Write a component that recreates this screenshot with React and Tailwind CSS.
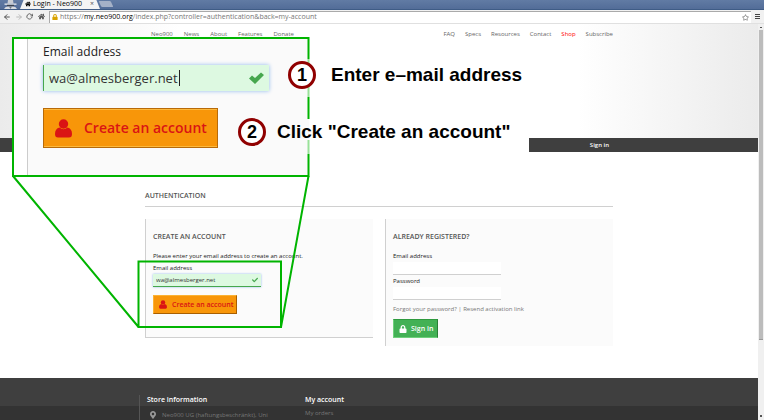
import React from "react";
import { FaCheck, FaLock, FaHome, FaMapMarkerAlt, FaRegStar } from "react-icons/fa";
import { FiRotateCw, FiArrowLeft, FiArrowRight } from "react-icons/fi";

const LEFT_LINKS = ["Neo900", "News", "About", "Features", "Donate"];
const RIGHT_LINKS = ["FAQ", "Specs", "Resources", "Contact", "Shop", "Subscribe"];

function IncognitoIcon() {
  return (
    <svg viewBox="0 0 13 9" className="h-[9px] w-[13px]">
      <path d="M3.500 3.500 4 0h5l.5 3.500Z" fill="#c9cdd3" />
      <path d="M.5 3.500h12v1.300H.5z" fill="#e8eaee" />
      <path d="M3 4.800h7v1.700H3z" fill="#3a424f" />
      <path d="M0 9q1-2.500 3.500-2.500h6Q12 6.500 13 9Z" fill="#d9dce1" />
      <path d="M5 6.500h3L6.500 9Z" fill="#6d7683" />
    </svg>
  );
}

function UserIcon({ className }) {
  return (
    <svg viewBox="0 0 17 19" className={className} fill="currentColor">
      <circle cx="8.500" cy="5" r="4.700" />
      <path d="M4.500 8.500Q8.500 12 12.500 8.500 17 9.500 17 15q0 3.500-3 3.500H3Q0 18.500 0 15 0 9.500 4.500 8.500Z" />
    </svg>
  );
}

function BrowserChrome() {
  return (
    <div className="text-[7px] leading-[8px]">
      <div className="flex h-[10px] items-end border-b border-[#3f5c86] bg-gradient-to-b from-[#617ba4] to-[#536d98]">
        <div className="flex h-[9px] w-[20px] justify-center overflow-hidden">
          <IncognitoIcon />
        </div>
        <div className="flex h-[10px] w-[80px] items-center gap-[2px] bg-[#f4f4f4] pl-[5px] text-black [clip-path:polygon(4px_0,76px_0,100%_100%,0_100%)]">
          <FaHome size={6} />
          <span className="whitespace-nowrap">Login - Neo900</span>
          <button aria-label="Close tab" className="ml-auto mr-[6px] text-[#555]">×</button>
        </div>
        <button aria-label="New tab" className="mb-[2px] h-[6px] w-[12px] -skew-x-[-25deg] rounded-[1px] bg-[#a5b1c7]" />
      </div>
      <div className="flex h-[14px] items-center border-b border-[#e0e0e0] bg-[#f1f1f1] pl-[3px] text-[#555]">
        <button aria-label="Back" className="w-[12px]"><FiArrowLeft size={8} strokeWidth={3} /></button>
        <button aria-label="Forward" className="w-[11px] text-[#bbb]"><FiArrowRight size={8} strokeWidth={3} /></button>
        <button aria-label="Reload" className="w-[12px]"><FiRotateCw size={7} strokeWidth={3} /></button>
        <button aria-label="Home" className="w-[11px]"><FaHome size={7} /></button>
        <div className="flex h-[12px] flex-1 items-center gap-[2px] border-l border-t border-[#aaa] bg-white pl-[2px] pr-[2px] text-[#777]">
          <FaLock size={6} className="text-[#d9a300]" />
          <div className="flex-1 whitespace-nowrap">
            https://<span className="text-black">my.neo900.org</span>/index.php?controller=authentication&amp;back=my-account
          </div>
          <button aria-label="Bookmark" className="text-[#777]"><FaRegStar size={7} /></button>
        </div>
        <button aria-label="Menu" className="mx-[4px] flex w-[5px] flex-col gap-px">
          <span className="h-px w-full bg-[#444]" />
          <span className="h-px w-full bg-[#444]" />
          <span className="h-px w-full bg-[#444]" />
        </button>
      </div>
    </div>
  );
}

function NavLinks({ items, className }) {
  return (
    <nav className={`flex ${className}`}>
      {items.map((item) => (
        <a key={item} href="#" className={item === "Shop" ? "text-[#f00]" : "text-[#666]"}>
          {item}
        </a>
      ))}
    </nav>
  );
}

function Header() {
  return (
    <header>
      <div className="h-[114px] bg-[linear-gradient(to_right,#ebebeb,#ffffff_180px,#ffffff_calc(100%-180px),#ebebeb)]">
        <div className="mx-auto flex max-w-[468px] justify-between pl-[6px] pt-[6px] text-[6px] leading-[8px]">
          <NavLinks items={LEFT_LINKS} className="gap-[11px]" />
          <NavLinks items={RIGHT_LINKS} className="gap-[10px]" />
        </div>
      </div>
      <div className="h-[14px] bg-[#3f3f3f]">
        <div className="mx-auto flex h-full max-w-[468px] items-center justify-end pr-[4px]">
          <a href="#" className="text-[6px] font-semibold leading-[8px] text-white">Sign in</a>
        </div>
      </div>
    </header>
  );
}

function Field({ id, label, type, className }) {
  return (
    <div className={className}>
      <label htmlFor={id} className="block text-[6px] leading-[8px] text-[#222]">{label}</label>
      <input id={id} type={type} className="mt-[2px] block h-[13px] w-[108px] border-b border-[#d0d0d0] bg-white px-[3px] text-[6px]" />
    </div>
  );
}

function CreateAccountCard() {
  return (
    <section className="flex-1 self-start border-b border-l border-[#d0d0d0] bg-[#fbfbfb] pb-[23px] pl-[7px] pt-[12px]">
      <h2 className="text-[7px] font-semibold leading-[12px] text-[#555]">CREATE AN ACCOUNT</h2>
      <p className="mt-[9px] text-[6px] leading-[8px] text-[#222]">Please enter your email address to create an account.</p>
      <label htmlFor="new-email" className="mt-[4px] block text-[6px] leading-[8px] text-[#222]">Email address</label>
      <div className="mt-[2px] flex h-[13px] w-[108px] items-center border-b border-[#46a74e] bg-[#ddf9e1] px-[3px] shadow-[0_0_2px_#8fb8ec]">
        <input id="new-email" type="email" defaultValue="wa@almesberger.net" className="min-w-0 flex-1 bg-transparent text-[6px] leading-[8px] text-[#333] outline-none" />
        <FaCheck size={6} className="text-[#46a74e]" />
      </div>
      <button className="mt-[8px] flex h-[19px] w-[84px] items-center gap-[5px] border border-b-[#a85f00] border-l-[#fbb233] border-r-[#a85f00] border-t-[#fbb233] bg-[#f89609] pl-[5px] text-[7px] font-semibold leading-[8px] text-[#da1414]">
        <UserIcon className="h-[9px] w-[8px]" />
        <span className="whitespace-nowrap">Create an account</span>
      </button>
    </section>
  );
}

function SignInCard() {
  return (
    <section className="flex-1 self-start border-l border-[#d0d0d0] bg-[#fbfbfb] pb-[8px] pl-[7px] pt-[12px]">
      <h2 className="text-[7px] font-semibold leading-[12px] text-[#555]">ALREADY REGISTERED?</h2>
      <Field id="email" label="Email address" type="email" className="mt-[9px]" />
      <Field id="password" label="Password" type="password" className="mt-[2px]" />
      <p className="mt-[5px] text-[6px] leading-[8px] text-[#777]">
        <a href="#">Forgot your password?</a> | <a href="#">Resend activation link</a>
      </p>
      <button className="mt-[6px] flex h-[19px] w-[45px] items-center gap-[4px] border border-b-[#6fd07c] border-l-[#6fd07c] border-r-[#2a7f36] border-t-[#2f9a3f] bg-[#43b155] pl-[5px] text-[7px] font-semibold leading-[8px] text-white">
        <FaLock size={8} />
        <span className="whitespace-nowrap">Sign in</span>
      </button>
    </section>
  );
}

function Footer() {
  return (
    <footer className="flex-1 bg-[linear-gradient(#3f3f3f_28px,#333333_28px)] pt-[17px]">
      <div className="mx-auto flex h-[25px] max-w-[480px] overflow-hidden border-l border-[#555]">
        <div className="w-[158px] pl-[7px]">
          <h3 className="text-[7px] font-semibold leading-[10px] text-white">Store information</h3>
          <p className="mt-[5px] flex items-center gap-[5px] whitespace-nowrap pl-[2px] text-[6px] leading-[10px] text-[#777]">
            <FaMapMarkerAlt size={8} className="text-[#999]" />
            Neo900 UG (haftungsbeschränkt), Uni
          </p>
        </div>
        <div className="pl-[7px]">
          <h3 className="text-[7px] font-semibold leading-[10px] text-white">My account</h3>
          <a href="#" className="mt-[3px] block text-[6px] leading-[10px] text-[#777]">My orders</a>
        </div>
      </div>
    </footer>
  );
}

function Scrollbar() {
  return (
    <div className="flex w-[6px] flex-col items-center bg-[#f0f0f0] text-[#555]">
      <svg viewBox="0 0 6 6" className="h-[6px] w-[6px]"><path d="M2 4h2V3H2z" fill="#555" /></svg>
      <div className="h-[310px] w-[4px] border-b border-[#999] bg-[#bcbcbc]" />
      <svg viewBox="0 0 6 6" className="mb-[1px] mt-auto h-[6px] w-[6px]"><path d="M2 2h2v2H2z" fill="#555" /></svg>
    </div>
  );
}

function Step({ number, children, className }) {
  return (
    <div className={`absolute flex items-center whitespace-nowrap font-['Liberation_Sans',Arial,sans-serif] font-bold text-black ${className}`}>
      <span className="flex h-[28px] w-[28px] items-center justify-center rounded-full border-[3px] border-[#900000] bg-white text-[18px] leading-[20px]">
        {number}
      </span>
      <span className="text-[19px] leading-[22px]">{children}</span>
    </div>
  );
}

function Tutorial() {
  return (
    <div className="absolute left-0 top-0">
      <div className="absolute left-[308px] top-[119px] h-[35px] w-[221px] bg-white" />
      <div className="absolute left-[13px] top-[38px] h-[138px] w-[296px] bg-white pl-[14px]">
        <div className="h-full border-l border-[#ccc] bg-[#fafafa] pl-[15px] pt-[6px]">
          <label htmlFor="zoom-email" className="block text-[12px] leading-[16px] text-[#222]">Email address</label>
          <div className="mt-[5px] flex h-[26px] w-[226px] items-center border-l border-[#46a74e] bg-[#ddf9e1] pl-[5px] pr-[5px] shadow-[0_0_4px_#8fb8ec]">
            <div className="flex flex-1 items-center">
              <input id="zoom-email" type="email" defaultValue="wa@almesberger.net" className="w-[130px] bg-transparent text-[13px] leading-[18px] text-[#333] outline-none" />
              <span className="h-[16px] w-px bg-[#222]" />
            </div>
            <svg viewBox="0 0 15 12" className="h-[12px] w-[15px]"><path d="M0 6.500 3 3.500 6 6 12 .5 15 3 6 12Z" fill="#46a74e" /></svg>
          </div>
          <button className="mt-[17px] flex h-[40px] w-[175px] items-center gap-[12px] border border-[#b86a08] bg-[#f89609] pl-[11px] text-[14px] font-semibold leading-[18px] text-[#da1414] shadow-[inset_0_1px_0_#fdb93c,inset_0_-1px_0_#fdb93c]">
            <UserIcon className="h-[19px] w-[17px]" />
            <span className="whitespace-nowrap">Create an account</span>
          </button>
        </div>
      </div>
      <svg width="320" height="335" viewBox="0 0 320 335" className="absolute left-0 top-0 max-w-none" fill="none" stroke="#00b400" strokeWidth="2">
        <path d="M308.500 38H13V176H308.500" />
        <path d="M308.500 37V59M308.500 97V119M308.500 154V177" />
        <path d="M308.500 59V97M308.500 140V154" stroke="#99e199" />
        <path d="M138.500 261.500H281V327H138.500ZM13 176 138.500 327M308.500 176 281 327" />
      </svg>
      <Step number="1" className="left-[288px] top-[61px] gap-[15px]">Enter e–mail address</Step>
      <Step number="2" className="left-[238px] top-[118px] gap-[11px]">Click "Create an account"</Step>
    </div>
  );
}

export default function App() {
  return (
    <div className="relative flex min-h-screen flex-col overflow-hidden bg-white font-['Open_Sans',sans-serif]">
      <BrowserChrome />
      <div className="flex flex-1">
        <div className="flex min-w-0 flex-1 flex-col">
          <Header />
          <main className="mx-auto w-full max-w-[468px] pb-[32px] pt-[38px]">
            <h1 className="border-b border-[#d0d0d0] pb-[4px] text-[7px] font-semibold leading-[12px] text-[#555]">AUTHENTICATION</h1>
            <div className="mt-[12px] flex gap-[12px]">
              <CreateAccountCard />
              <SignInCard />
            </div>
          </main>
          <Footer />
        </div>
        <Scrollbar />
      </div>
      <Tutorial />
    </div>
  );
}
